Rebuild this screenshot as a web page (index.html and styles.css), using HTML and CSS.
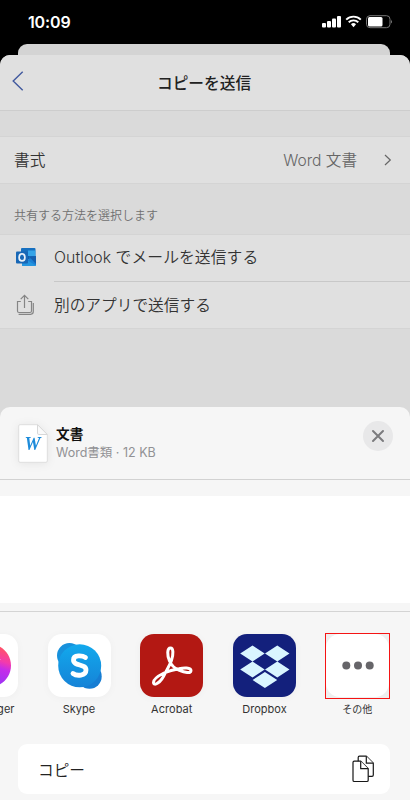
FILE: index.html
```html
<!DOCTYPE html>
<html lang="ja">
<head>
<meta charset="utf-8">
<title>コピーを送信</title>
<link rel="stylesheet" href="styles.css">
</head>
<body>
<div class="phone">
  <header class="status">
    <span class="time">10:09</span>
    <svg class="status-icons" width="72" height="14" viewBox="0 0 72 14">
      <g fill="#fff">
        <rect x="0" y="8" width="4" height="4.500" rx="1"/>
        <rect x="5" y="6" width="4" height="6.500" rx="1"/>
        <rect x="10" y="3.500" width="4" height="9" rx="1"/>
        <rect x="15" y="1" width="4" height="11.500" rx="1"/>
        <path d="M29 9.200a3.300 3.300 0 0 1 5 0L31.500 12.300z"/>
        <rect x="46" y="2" width="14.500" height="9.500" rx="1.500"/>
        <path d="M69 4.500q1.700 2 0 4z" fill="#888"/>
      </g>
      <path d="M24.200 4.600a10.500 10.500 0 0 1 14.600 0M26.700 7.300a6.900 6.900 0 0 1 9.600 0" fill="none" stroke="#fff" stroke-width="1.900"/>
      <rect x="44.500" y=".7" width="23.500" height="12" rx="3.500" fill="none" stroke="#777"/>
    </svg>
  </header>
  <div class="back-card"></div>
  <main class="sheet">
    <div class="title-bar">
      <svg class="back" width="12" height="20" viewBox="0 0 12 20"><path d="M10.700.7 1.200 10l9.500 9.300" fill="none" stroke="#41599e" stroke-width="1.400"/></svg>
      <h1>コピーを送信</h1>
    </div>
    <div class="format-row">
      <span>書式</span>
      <span class="value">Word 文書</span>
      <svg width="8" height="12" viewBox="0 0 8 12"><path d="m1 1 5.300 5L1 11" fill="none" stroke="#666" stroke-width="1.200"/></svg>
    </div>
    <p class="section-label">共有する方法を選択します</p>
    <div class="list">
      <div class="item">
        <svg class="outlook" width="22" height="20" viewBox="0 0 22 20">
          <path d="M6 2q0-1 1-1h12.500q1 0 1 1v10H6z" fill="#1670c0"/>
          <path d="M13 3.500h7.300V9H13z" fill="#35a4e8"/>
          <path d="M7 9h6.500v6H7z" fill="#114f94"/>
          <path d="m7 15 14-6v9q0 1-1 1H8q-1 0-1-1z" fill="#1b80d5"/>
          <path d="m7 10 14 8.500-1 .5H8q-1 0-1-1z" fill="#2495df"/>
          <path d="M14 9.500 21 9v8z" fill="#155fae"/>
          <rect x="1" y="4.500" width="12" height="12" rx="1" fill="#1767b6"/>
          <ellipse cx="7" cy="10.400" rx="2.900" ry="3.500" fill="none" stroke="#e8f0f8" stroke-width="1.700"/>
        </svg>
        <span class="item-text first">Outlook でメールを送信する</span>
      </div>
      <div class="item">
        <svg class="export" width="22" height="22" viewBox="0 0 22 22"><g fill="none" stroke="#858585" stroke-width="1.200"><path d="M5.800 7.500H2.500V17q0 1.500 1.500 1.500h11q1.500 0 1.500-1.500V7.500h-3.300"/><path d="M9.500 14V1.500M5.700 5.200l3.800-3.800 3.800 3.800"/><path d="M3.600 20.300h12q2.700 0 2.700-2.700V9"/></g></svg>
        <span class="item-text second">別のアプリで送信する</span>
      </div>
    </div>
  </main>
  <section class="share">
    <div class="document">
      <svg class="doc-icon" width="30" height="39" viewBox="0 0 30 39">
        <path d="M2 .7h17.500l9.800 9.800V37q0 1.300-1.300 1.300H2Q.7 38.300.7 37V2Q.7.700 2 .7z" fill="#fff" stroke="#dedede"/>
        <path d="M19.500.7v8.500q0 1.300 1.300 1.300h8.500z" fill="#fafafa" stroke="#d8d8d8"/>
        <text x="14.500" y="26" text-anchor="middle" class="word-letter">W</text>
      </svg>
      <div class="doc-info"><strong>文書</strong><span>Word書類 · 12 KB</span></div>
      <div class="close"><svg width="14" height="14" viewBox="0 0 14 14"><path d="m2 2 10 10M12 2 2 12" stroke="#7b7b7e" stroke-width="2" stroke-linecap="round"/></svg></div>
    </div>
    <div class="people"></div>
    <div class="apps">
      <div class="app">
        <div class="tile"><svg width="63" height="63" viewBox="0 0 63 63"><defs><linearGradient id="msg" x1="1" y1="0" x2=".65" y2="1"><stop offset=".15" stop-color="#ff5269"/><stop offset=".4" stop-color="#f43bab"/><stop offset=".55" stop-color="#c52de9"/><stop offset="1" stop-color="#8b35fa"/></linearGradient></defs><path d="M31 9c14 0 25 9.500 25 22.500S45 54 31 54l-8-1-8 3v-7C9 45 7 38 7 31.500 7 18.500 17 9 31 9z" fill="url(#msg)"/><path d="m16 38 11-12 7 6 12-7-12 13-7-6z" fill="#fff"/></svg></div>
        <span class="messenger">Messenger</span>
      </div>
      <div class="app">
        <div class="tile"><svg width="63" height="63" viewBox="0 0 63 63"><defs><linearGradient id="sky" x1="0" y1="0" x2="0" y2="1"><stop offset="0" stop-color="#12a9ed"/><stop offset="1" stop-color="#1683d7"/></linearGradient></defs><circle cx="21.500" cy="21.500" r="12.500" fill="#1791dc"/><circle cx="41.500" cy="42.500" r="12.200" fill="#167dd3"/><circle cx="31.700" cy="31.800" r="21.500" fill="url(#sky)"/><path d="M37.500 23.500c-3-2-12-3-12 2.500 0 6.500 12.500 3.500 12.500 10 0 6-9.300 6.300-13 3.500" fill="none" stroke="#fff" stroke-width="4.800" stroke-linecap="round"/></svg></div>
        <span>Skype</span>
      </div>
      <div class="app">
        <div class="tile red"><svg width="63" height="63" viewBox="0 0 63 63"><path d="M30.500 14c-3.500 0-3.500 7-1 13 2 4.500 5.500 7.500 9.300 9 6 2.500 12.200 4 12.200.8 0-3.500-7.500-3-12-2.100-5 .8-10.500 2.300-15 4.300-6 3-10.500 6.500-10.500 9.300 0 4.500 7.500.5 11.500-9 2.500-4.500 5-8.500 6.500-13 2-6 2-12.300-1-12.300z" fill="none" stroke="#fff" stroke-width="3" stroke-linejoin="round"/></svg></div>
        <span>Acrobat</span>
      </div>
      <div class="app">
        <div class="tile navy"><svg width="63" height="63" viewBox="0 0 63 63"><path fill="#d9f5ff" d="m19.500 11.500 12.200 8-12.200 8-12.300-8zm24.800 0 12.200 8-12.200 8-12.300-8zM19.500 27.500l12.200 8-12.200 8-12.300-8zm24.800 0 12.200 8-12.200 8-12.300-8zM31.900 38l12.300 8-12.300 8-12.300-8z"/></svg></div>
        <span>Dropbox</span>
      </div>
      <div class="app">
        <div class="highlight"><div class="tile"><svg width="63" height="63" viewBox="0 0 63 63"><g fill="#666569"><circle cx="20.300" cy="31.500" r="4"/><circle cx="32" cy="31.500" r="4"/><circle cx="43.700" cy="31.500" r="4"/></g></svg></div></div>
        <span class="other">その他</span>
      </div>
    </div>
    <div class="copy">
      <span>コピー</span>
      <svg width="23" height="28" viewBox="0 0 23 28"><g fill="#fff" stroke="#171717" stroke-width="1.200" stroke-linejoin="round"><path d="M7.500 1.200h6.800l7 7V20q0 1.300-1.300 1.300H7.500q-1.300 0-1.300-1.300V2.500q0-1.300 1.300-1.300z"/><path d="M14.300 1.200v7h7"/><path d="M2.300 6.200h6.400l7.500 7.500v11.500q0 1.300-1.300 1.300H2.300Q1 26.500 1 25.200V7.500q0-1.300 1.300-1.300z"/><path d="M8.700 6.200v7.500h7.500"/></g></svg>
    </div>
  </section>
</div>
</body>
</html>
```
FILE: styles.css
```css
* { box-sizing: border-box; }
body { margin: 0; font-family: Inter, "Noto Sans CJK JP", sans-serif; }
.phone { width: 410px; height: 800px; overflow: hidden; background: linear-gradient(#000 0 200px, #dadada 200px); display: flex; flex-direction: column; }
.status { height: 44px; flex: none; display: flex; justify-content: space-between; padding: 15px 16px 0 28px; color: #fff; }
.time { font-size: 16px; font-weight: 600; line-height: 14px; letter-spacing: -.15px; }
.status-icons { display: block; }
.back-card { height: 11px; flex: none; margin: 0 20px 0 18px; background: #d4d4d4; border-radius: 9px 9px 0 0; }
.sheet { height: 352px; flex: none; background: #dadada; border-radius: 10px 10px 0 0; color: #333; font-size: 15.7px; }
.title-bar { height: 56px; display: flex; align-items: center; background: #e0e0e0; border-radius: 10px 10px 0 0; border-bottom: 1px solid #cdcdcd; padding-left: 12px; }
.back { margin-top: -3px; }
h1 { font-size: 15.7px; line-height: 20px; font-weight: 500; margin: 2px 0 0 133px; color: #222; }
.format-row { height: 48px; margin-top: 25px; padding: 0 18px 0 14px; display: flex; align-items: center; background: #e0e0e0; border: solid #d4d4d4; border-width: 1px 0; }
.format-row span { margin-top: -2px; font-weight: 350; }
.format-row svg { margin-top: -1px; }
.format-row .value { margin-left: auto; margin-right: 27px; color: #666; font-size: 15.600px; }
.section-label { margin: 22px 0 0 14px; height: 28px; font-size: 12px; line-height: 20px; font-weight: 350; color: #707070; }
.list { height: 95px; background: #e0e0e0; border: solid #d4d4d4; border-width: 1px 0; }
.item { height: 47px; display: flex; align-items: center; padding-left: 15px; }
.item svg { flex: none; margin-right: 17px; }
.outlook { margin-top: -4px; }
.export { margin-top: -2px; }
.item-text { height: 47px; line-height: 46px; flex: 1; white-space: nowrap; font-weight: 350; }
.first { border-bottom: 1px solid #c8c8c8; font-size: 15.800px; letter-spacing: .05px; }
.second { line-height: 48px; }
.share { flex: none; height: 393px; background: #f6f6f6; border-radius: 10px 10px 0 0; }
.document { height: 73px; display: flex; padding: 17px 17px 0 18px; border-bottom: 1px solid #d2d2d2; }
.doc-icon { filter: drop-shadow(0 1px 4px #00000012); }
.word-letter { font: italic bold 18px "Liberation Serif", serif; fill: #1c8bda; }
.doc-info { margin-left: 8px; display: flex; flex-direction: column; }
.doc-info strong { font-size: 13.700px; line-height: 20px; font-weight: 700; color: #111; }
.doc-info span { font-size: 12.500px; line-height: 18px; color: #919194; }
.close { width: 30px; height: 30px; margin-left: auto; margin-top: -3px; border-radius: 50%; background: #e8e8e9; display: grid; place-items: center; }
.people { height: 107px; margin-top: 16px; background: #fff; }
.apps { height: 125px; margin-top: 8px; border-top: 1px solid #d4d4d4; padding-top: 22px; display: flex; gap: 29.750px; }
.app { width: 63px; flex: none; display: flex; flex-direction: column; align-items: center; }
.app:first-child { margin-left: -45.250px; }
.tile { width: 63px; height: 63px; border-radius: 14px; background: #fff; box-shadow: 0 1px 9px #00000009; }
.tile svg { display: block; }
.red { background: #b31813; }
.navy { background: #13207c; }
.highlight { width: 65px; height: 66px; flex: none; margin: -1px -1px -2px; border: 1px solid #f51414; background: #efefef; }
.highlight .tile { box-shadow: none; }
.app span { margin-top: 4px; font-size: 11px; line-height: 16px; color: #333; letter-spacing: .05px; }
.app .messenger { margin-right: 2px; }
.app .other { font-size: 10px; letter-spacing: 0; }
.copy { height: 50px; margin: 8px 20px 0 18px; padding: 0 15px 0 20px; border-radius: 9px; background: #fff; display: flex; align-items: center; justify-content: space-between; font-size: 15.700px; font-weight: 350; color: #222; }
```
